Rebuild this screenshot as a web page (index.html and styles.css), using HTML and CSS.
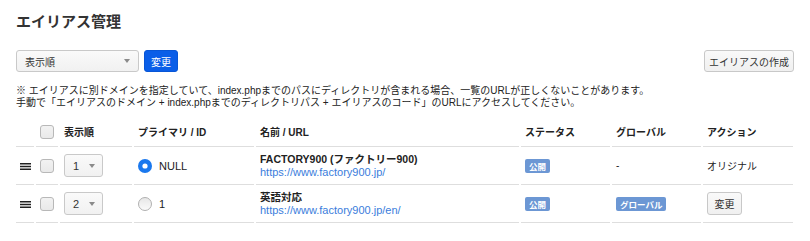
FILE: index.html
```html
<!DOCTYPE html>
<html lang="ja">
<head>
<meta charset="utf-8">
<title>エイリアス管理</title>
<link rel="stylesheet" href="styles.css">
</head>
<body>
<div class="page">
  <h1 class="title">エイリアス管理</h1>
  <div class="toolbar">
    <div class="toolbar-left">
      <div class="select select-wide"><span class="select-text">表示順</span><span class="caret"></span></div>
      <button class="btn btn-primary">変更</button>
    </div>
    <button class="btn btn-default">エイリアスの作成</button>
  </div>
  <p class="note">※ エイリアスに別ドメインを指定していて、index.phpまでのパスにディレクトリが含まれる場合、一覧のURLが正しくないことがあります。<br>手動で「エイリアスのドメイン + index.phpまでのディレクトリパス + エイリアスのコード」のURLにアクセスしてください。</p>
  <table class="table">
    <colgroup>
      <col class="c-handle"><col class="c-check"><col class="c-order"><col class="c-primary"><col class="c-name"><col class="c-status"><col class="c-global"><col class="c-action">
    </colgroup>
    <thead>
      <tr>
        <th></th>
        <th class="center"><span class="checkbox"></span></th>
        <th>表示順</th>
        <th>プライマリ / ID</th>
        <th>名前 / URL</th>
        <th>ステータス</th>
        <th>グローバル</th>
        <th>アクション</th>
      </tr>
    </thead>
    <tbody>
      <tr>
        <td class="center"><svg class="handle" width="11" height="7" viewBox="0 0 11 7"><rect x="0" y="0" width="11" height="1.5" fill="#222"/><rect x="0" y="2.75" width="11" height="1.5" fill="#222"/><rect x="0" y="5.5" width="11" height="1.5" fill="#222"/></svg></td>
        <td class="center"><span class="checkbox"></span></td>
        <td><div class="select select-small"><span class="select-text">1</span><span class="caret"></span></div></td>
        <td><div class="radio-row"><svg class="radio" width="14" height="14" viewBox="0 0 14 14"><circle cx="7" cy="7" r="7" fill="#1a78ee"/><circle cx="7" cy="7" r="2.6" fill="#fff"/></svg><span class="latin">NULL</span></div></td>
        <td><div class="name">FACTORY900 (ファクトリー900)</div><a class="url" href="#">https://www.factory900.jp/</a></td>
        <td><span class="badge">公開</span></td>
        <td>-</td>
        <td>オリジナル</td>
      </tr>
      <tr>
        <td class="center"><svg class="handle" width="11" height="7" viewBox="0 0 11 7"><rect x="0" y="0" width="11" height="1.5" fill="#222"/><rect x="0" y="2.75" width="11" height="1.5" fill="#222"/><rect x="0" y="5.5" width="11" height="1.5" fill="#222"/></svg></td>
        <td class="center"><span class="checkbox"></span></td>
        <td><div class="select select-small"><span class="select-text">2</span><span class="caret"></span></div></td>
        <td><div class="radio-row"><svg class="radio" width="14" height="14" viewBox="0 0 14 14"><defs><linearGradient id="rg" x1="0" y1="0" x2="0" y2="1"><stop offset="0" stop-color="#e6e6e6"/><stop offset="1" stop-color="#fbfbfb"/></linearGradient></defs><circle cx="7" cy="7" r="6.5" fill="url(#rg)" stroke="#b0b0b0" stroke-width="1"/></svg><span class="latin">1</span></div></td>
        <td><div class="name">英語対応</div><a class="url" href="#">https://www.factory900.jp/en/</a></td>
        <td><span class="badge">公開</span></td>
        <td><span class="badge">グローバル</span></td>
        <td><button class="btn btn-default btn-small">変更</button></td>
      </tr>
    </tbody>
  </table>
</div>
</body>
</html>
```

FILE: styles.css
```css
html, body {
  margin: 0;
  padding: 0;
  background: #fff;
}
body {
  font-family: "Liberation Sans", "Noto Sans CJK JP", sans-serif;
  font-size: 10px;
  color: #333;
}
.page {
  padding: 11px 16px 0 16px;
}
.title {
  margin: 0;
  font-size: 15px;
  line-height: 20px;
  font-weight: bold;
  color: #333;
  font-family: "Noto Sans CJK JP", sans-serif;
}
.toolbar {
  margin-top: 19px;
  display: flex;
  justify-content: space-between;
  align-items: center;
}
.toolbar-left {
  display: flex;
  gap: 5px;
}
.select {
  box-sizing: border-box;
  display: flex;
  align-items: center;
  justify-content: space-between;
  height: 22px;
  border: 1px solid #c9c9c9;
  border-radius: 3px;
  background: linear-gradient(#fafafa, #f1f1f1);
  color: #333;
}
.select-wide {
  width: 123px;
  padding: 0 8px 0 8px;
}
.select-small {
  width: 39px;
  height: 23px;
  padding: 0 7px 0 8px;
  font-size: 11px;
}
.caret {
  width: 0;
  height: 0;
  border-left: 3.5px solid transparent;
  border-right: 3.5px solid transparent;
  border-top: 4px solid #8a8a8a;
}
.btn {
  box-sizing: border-box;
  height: 22px;
  font-family: "Noto Sans CJK JP", sans-serif;
  font-size: 10px;
  border-radius: 3px;
  padding: 0 8px;
  margin: 0;
  cursor: pointer;
}
.btn-primary {
  width: 34px;
  padding: 0;
  background: #0a5ee8;
  border: 1px solid #0856d6;
  color: #fff;
}
.btn-default {
  background: linear-gradient(#f9f9f9, #f0f0f0);
  border: 1px solid #c8c8c8;
  color: #333;
}
.toolbar > .btn-default {
  width: 90px;
  padding: 0;
}
.btn-small {
  width: 35px;
  height: 23px;
  padding: 0;
}
.note {
  margin: 13px 0 0 0;
  font-size: 10px;
  line-height: 12px;
  color: #222;
}
.table {
  margin: 8px 0 0 -2px;
  border-collapse: separate;
  border-spacing: 2px 0;
  table-layout: fixed;
  width: 781px;
}
.c-handle { width: 18px; }
.c-check { width: 22px; }
.c-order { width: 72px; }
.c-primary { width: 120px; }
.c-name { width: 263px; }
.c-status { width: 89px; }
.c-global { width: 89px; }
.c-action { width: 90px; }
.table th, .table td {
  padding: 0 0 0 4px;
  text-align: left;
  vertical-align: middle;
  border-bottom: 1px solid #dedede;
}
.table th {
  height: 29px;
  font-weight: bold;
  color: #222;
}
.table td {
  height: 37px;
  color: #222;
}
.table .center {
  padding: 0;
  text-align: center;
}
.checkbox {
  display: inline-block;
  box-sizing: border-box;
  width: 14px;
  height: 14px;
  border: 1px solid #b8b8b8;
  border-radius: 3px;
  background: linear-gradient(#f2f2f2, #e9e9e9);
  vertical-align: middle;
}
.handle {
  display: inline-block;
  vertical-align: middle;
}
.radio-row {
  display: flex;
  align-items: center;
  gap: 7px;
}
.radio {
  display: block;
  flex: none;
}
.latin {
  font-size: 11px;
}
.name {
  font-weight: bold;
  font-size: 10.5px;
  line-height: 13px;
  color: #222;
}
.url {
  display: block;
  font-size: 11px;
  line-height: 13px;
  color: #3a7ddc;
  text-decoration: none;
}
.badge {
  display: inline-block;
  height: 14px;
  line-height: 14px;
  padding: 0 4px;
  border-radius: 2px;
  background: #6c97d4;
  color: #fff;
  font-size: 8.5px;
  font-weight: bold;
  font-family: "Noto Sans CJK JP", sans-serif;
  vertical-align: middle;
}
```
